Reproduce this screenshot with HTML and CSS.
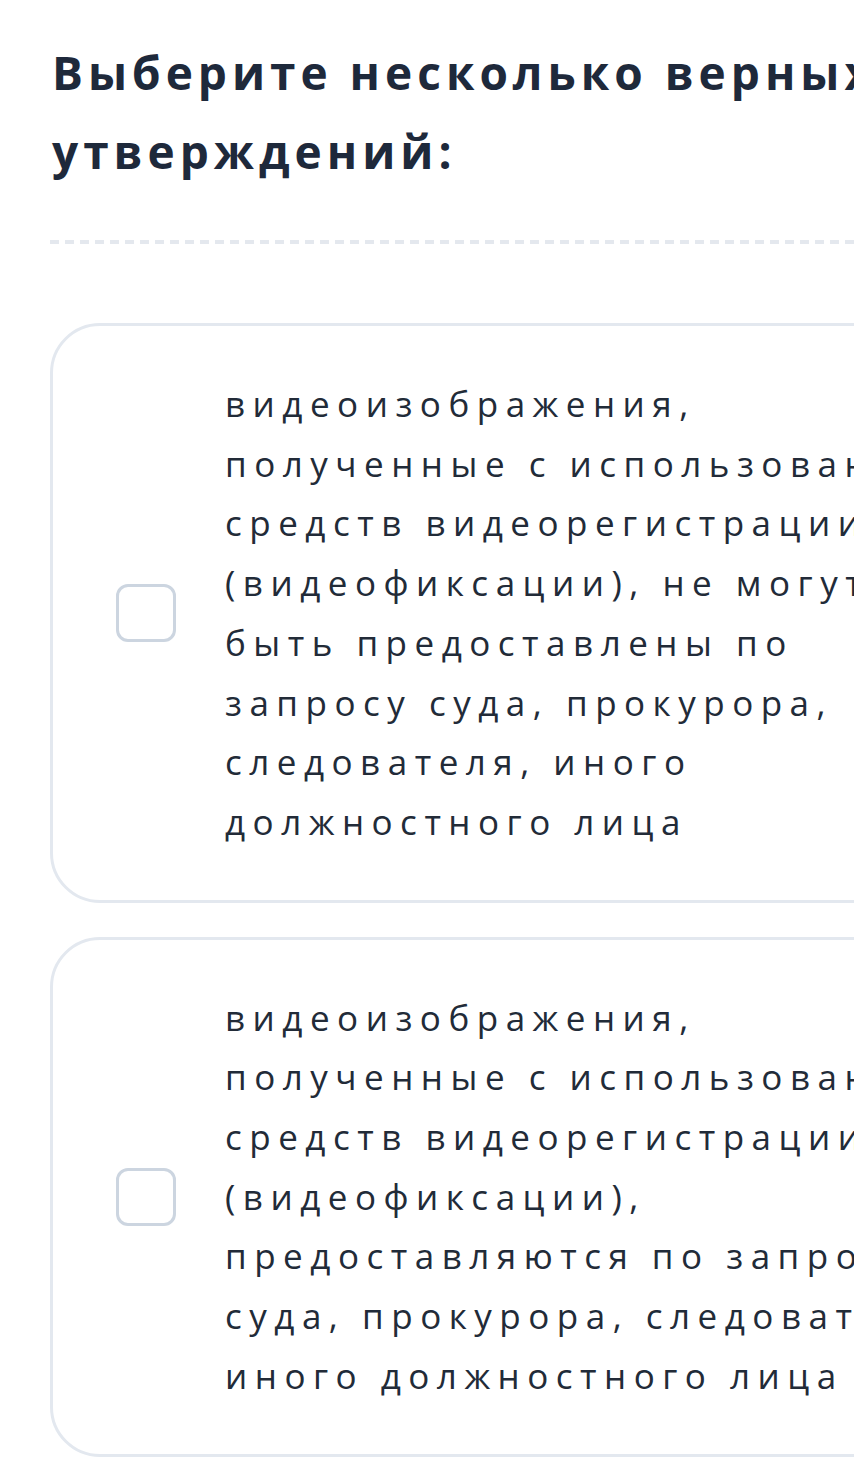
FILE: index.html
```html
<!DOCTYPE html>
<html lang="ru">
<head>
    <meta charset="UTF-8">
    <meta name="viewport" content="width=device-width, initial-scale=1.0">
    <title>Вопрос</title>
    <link rel="stylesheet" href="styles.css">
</head>
<body>
    <div class="page">
        <h2 class="question">Выберите несколько верных утверждений:</h2>
        <div class="divider"></div>

        <div class="options">
            <label class="option">
                <span class="checkbox"></span>
                <span class="option-text">видеоизображения, полученные с использованием средств видеорегистрации (видеофиксации), не могут быть предоставлены по запросу суда, прокурора, следователя, иного должностного лица</span>
            </label>

            <label class="option">
                <span class="checkbox"></span>
                <span class="option-text">видеоизображения, полученные с использованием средств видеорегистрации (видеофиксации), предоставляются по запросу суда, прокурора, следователя, иного должностного лица</span>
            </label>
        </div>
    </div>
</body>
</html>
```

FILE: styles.css
```css
* {
    box-sizing: border-box;
    margin: 0;
    padding: 0;
}

html, body {
    overflow: hidden;
}

body {
    background-color: #ffffff;
    font-family: "Open Sans", "Noto Sans", sans-serif;
    color: #1f2937;
}

.page {
    width: 1060px;
    padding: 33px 0 0 50px;
}

.question {
    font-size: 46px;
    font-weight: 700;
    line-height: 79px;
    letter-spacing: 5px;
    color: #1e293b;
    padding-left: 2px;
}

.divider {
    height: 4px;
    margin-top: 49px;
    background: repeating-linear-gradient(to right, #e4e8ee 0, #e4e8ee 9px, transparent 9px, transparent 15px);
}

.options {
    display: flex;
    flex-direction: column;
    gap: 34px;
    margin-top: 79px;
}

.option {
    display: flex;
    align-items: center;
    border: 3px solid #e3e8ef;
    border-radius: 50px;
    padding: 48px 0 48px 63px;
    cursor: pointer;
}

.checkbox {
    flex-shrink: 0;
    width: 60px;
    height: 58px;
    border: 3px solid #ccd5e0;
    border-radius: 12px;
    margin-right: 49px;
}

.option-text {
    width: 750px;
    font-size: 35px;
    font-weight: 500;
    line-height: 59.7px;
    letter-spacing: 7.5px;
    color: #222b38;
}
```
